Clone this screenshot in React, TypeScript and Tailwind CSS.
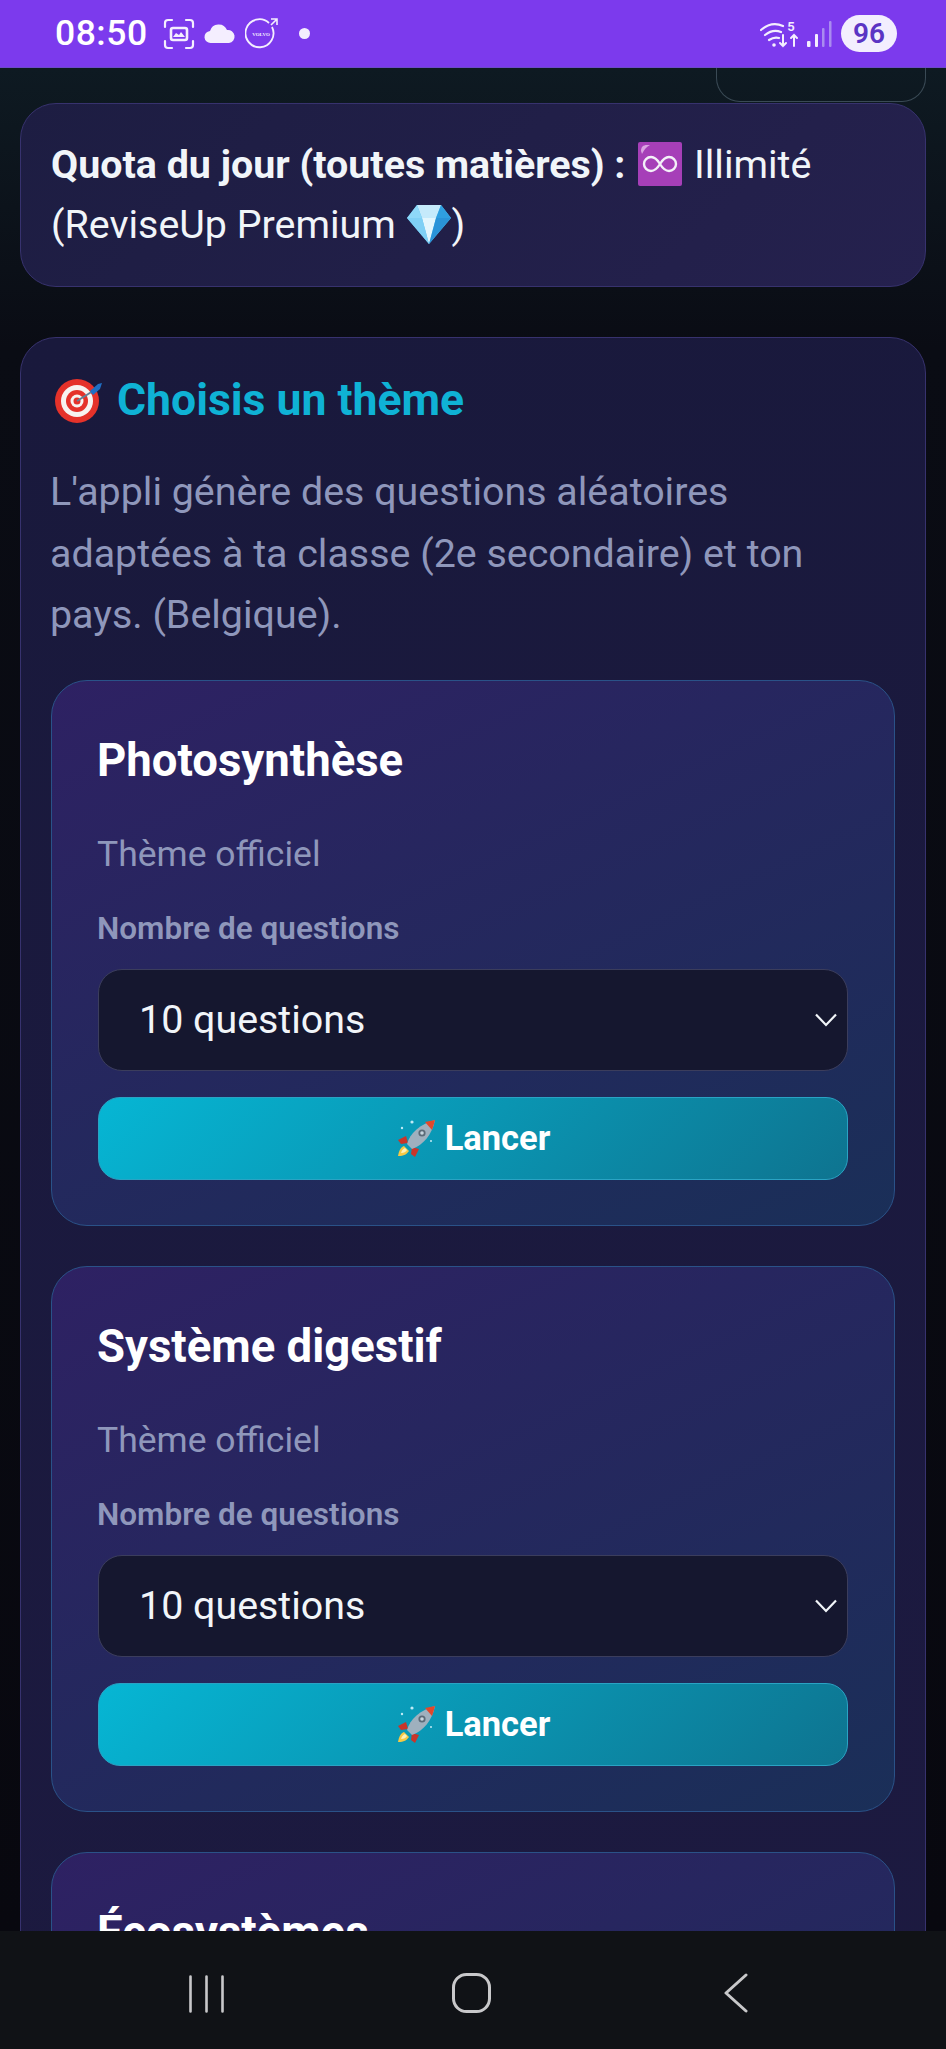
import React from "react";

const Gem = () => (
  <svg viewBox="0 0 44 40" className="inline-block w-[44px] h-[40px] align-[-6px] mx-px">
    <path d="M10 1h24l10 13-22 26L0 14z" fill="#5cc3f2" />
    <path d="M10 1h24l-5 13H15z" fill="#c5eafb" />
    <path d="M15 14h14l-7 26z" fill="#e3f6fd" />
    <path d="M0 14 10 1l5 13z" fill="#8ed8f8" />
    <path d="M44 14 34 1l-5 13z" fill="#2f9fe0" />
    <path d="M29 14h15L22 40z" fill="#2a93d8" />
    <path d="M0 14h15l7 26z" fill="#7fd0f5" />
  </svg>
);

const Infinity_ = () => (
  <svg viewBox="0 0 44 44" className="inline-block w-[44px] h-[44px] align-[-8px] ml-[3px] mr-[2px]">
    <rect width="44" height="44" rx="2" fill="#a63fb8" />
    <path d="M3 9c0-4 2-6 6-6h3C8 5 6 8 4 12z" fill="#d9a3e2" />
    <path
      d="M22 22c-3-5-6-7-9-7a7 7 0 0 0 0 14c3 0 6-2 9-7s6-7 9-7a7 7 0 0 1 0 14c-3 0-6-2-9-7z"
      fill="none"
      stroke="#f3f0f8"
      strokeWidth="2.4"
    />
  </svg>
);

const Target = () => (
  <svg viewBox="0 0 48 46" className="inline-block w-[48px] h-[46px] ml-[4px]">
    <circle cx="22" cy="24" r="22" fill="#e5322a" />
    <circle cx="22" cy="24" r="16" fill="#f7f3f0" />
    <circle cx="22" cy="24" r="11" fill="#e5322a" />
    <circle cx="22" cy="24" r="6.5" fill="#f7f3f0" />
    <circle cx="22" cy="24" r="3.5" fill="#e5322a" />
    <path d="M22 24 38 14" stroke="#5f7f96" strokeWidth="2" />
    <path d="M35 14l8-7 4-1-2 6-7 6z" fill="#1f6fc4" />
  </svg>
);

const Rocket = () => (
  <svg viewBox="0 0 40 40" className="inline-block w-[40px] h-[40px] align-[-9px]">
    <path d="M2 37c1-6 3-9 6-10l5 5c-2 3-5 5-11 5z" fill="#f6c945" />
    <path d="M5 34c1-3 2-4 4-5l2 2c-1 2-3 3-6 3z" fill="#fdf1b8" />
    <path d="M10 17 2 21l3 4 7-1z" fill="#c9352a" />
    <path d="M23 30l-4 8-4-3 1-7z" fill="#c9352a" />
    <path d="M11 25C14 14 24 5 39 1c-3 15-12 25-23 29z" fill="#9fb0be" />
    <path d="M29 3 39 1c-1 4-2 7-3 10z" fill="#e2482b" />
    <circle cx="26" cy="14" r="3.6" fill="#5c6b78" />
    <circle cx="26" cy="14" r="1.8" fill="#c8d5de" />
    <circle cx="6" cy="9" r="1.2" fill="#bfeaf5" />
    <circle cx="35" cy="22" r="1" fill="#bfeaf5" />
    <circle cx="16" cy="3" r="1.6" fill="#bfeaf5" />
  </svg>
);

const StatusBar = () => (
  <div className="h-[68px] shrink-0 bg-[#7c3aed] border-b border-[#6d4ac9] flex items-center pl-[55px] pr-[49px] text-white">
    <span className="text-[35.5px] font-medium tracking-[0.5px]">08:50</span>
    <svg viewBox="0 0 32 32" className="w-[32px] h-[32px] ml-[15px]" fill="none" stroke="#f4eefe" strokeWidth="2.2" strokeLinecap="round">
      <path d="M2 9V5a3 3 0 0 1 3-3h4M23 2h4a3 3 0 0 1 3 3v4M30 23v4a3 3 0 0 1-3 3h-4M9 30H5a3 3 0 0 1-3-3v-4" />
      <rect x="8" y="10" width="16" height="12" rx="2" strokeWidth="2.6" />
      <path d="M10 19l3-4 3 2 2-3 4 5z" fill="#f4eefe" stroke="none" />
    </svg>
    <svg viewBox="0 0 32 20" className="w-[32px] h-[20px] ml-[9px]" fill="#f4eefe">
      <path d="M7 19a6 6 0 0 1-1-12 9 9 0 0 1 17-1 6.5 6.5 0 0 1 2 13z" />
    </svg>
    <svg viewBox="0 0 34 34" className="w-[34px] h-[34px] ml-[9px]" fill="none" stroke="#f4eefe" strokeWidth="1.8">
      <path d="M27 10A14 14 0 1 1 24 6" />
      <path d="M26 2h6v6M32 2l-6 6" strokeWidth="1.6" />
      <text x="16" y="19" textAnchor="middle" fontSize="5" fontWeight="700" fill="#f4eefe" stroke="none" fontFamily="'Liberation Serif', serif">
        VOLVO
      </text>
    </svg>
    <span className="w-[11px] h-[11px] rounded-full bg-[#f4eefe] ml-[20px]" />
    <div className="ml-auto flex items-center">
      <svg viewBox="0 0 40 30" className="w-[40px] h-[30px]" fill="none" stroke="#f4eefe" strokeWidth="2.2" strokeLinecap="round">
        <path d="M1 11c7-6 15-7 22-4M5 16c5-4 11-5 16-3M9 21c3-2 7-3 10-2" />
        <circle cx="14" cy="26" r="1.8" fill="#f4eefe" stroke="none" />
        <text x="31" y="12" textAnchor="middle" fontSize="13" fontWeight="600" fill="#f4eefe" stroke="none" fontFamily="Roboto, sans-serif">
          5
        </text>
        <path d="M23 16v11m-3-3 3 3 3-3M34 27V16m-3 3 3-3 3 3" strokeWidth="2" />
      </svg>
      <svg viewBox="0 0 25 26" className="w-[25px] h-[26px] ml-[7px]">
        <rect x="0" y="20" width="3.5" height="6" rx="1" fill="#f4eefe" />
        <rect x="8" y="13" width="3" height="13" rx="1" fill="#f4eefe" />
        <rect x="15" y="7" width="2.5" height="19" rx="1" fill="#a98bf0" />
        <rect x="22" y="0" width="2.5" height="26" rx="1" fill="#a98bf0" />
      </svg>
      <span className="ml-[9px] w-[56px] h-[37px] rounded-full bg-[#f3eefe] text-[#5b34c4] text-[28px] font-semibold flex items-center justify-center">
        96
      </span>
    </div>
  </div>
);

const NavBar = () => (
  <div className="h-[118px] shrink-0 bg-[#101216] flex items-start pt-[42px] pl-[189px] relative z-10">
    <svg viewBox="0 0 35 38" className="w-[35px] h-[38px] mt-[2px]" fill="none" stroke="#c8c8ca" strokeWidth="2.6" strokeLinecap="round">
      <path d="M1.5 1.5v35M17.5 1.5v35M33.5 1.5v35" />
    </svg>
    <svg viewBox="0 0 39 40" className="w-[39px] h-[40px] ml-[228px]" fill="none" stroke="#c8c8ca" strokeWidth="3">
      <rect x="1.5" y="1.5" width="36" height="37" rx="13" />
    </svg>
    <svg viewBox="0 0 24 40" className="w-[24px] h-[40px] ml-[233px]" fill="none" stroke="#c8c8ca" strokeWidth="3" strokeLinecap="round" strokeLinejoin="round">
      <path d="M22 2 2 20l20 18" />
    </svg>
  </div>
);

const ThemeCard = ({ title }: { title: string }) => (
  <div className="rounded-[36px] border border-[#2a5288] bg-[linear-gradient(155deg,#2e2163,#1a2f58)] px-[46px] pt-[50px] pb-[45px]">
    <h3 className="-ml-px text-[45.5px] leading-[60px] font-bold text-white">{title}</h3>
    <p className="-ml-px mt-[33px] text-[35.5px] leading-[60px] text-[#8f97bb]">Thème officiel</p>
    <p className="-ml-px mt-[25px] text-[31.5px] leading-[40px] font-semibold text-[#8f97bb]">Nombre de questions</p>
    <div className="mt-[20px] h-[102px] rounded-[24px] border border-[#3b3d5c] bg-[#15172f] flex items-center justify-between pl-[40px] pr-[10px]">
      <span className="text-[39.4px] text-[#f1f5f9]">10 questions</span>
      <svg viewBox="0 0 22 14" className="w-[22px] h-[14px]" fill="none" stroke="#f1f5f9" strokeWidth="2.2">
        <path d="M1 1.5 11 12 21 1.5" />
      </svg>
    </div>
    <div className="mt-[26px] h-[83px] rounded-[22px] border border-[#2aa3c4] bg-[linear-gradient(135deg,#06b6d4,#0e7490)] flex items-center justify-center gap-[9px] text-[34.5px] font-bold text-white">
      <Rocket />
      <span>Lancer</span>
    </div>
  </div>
);

export default function App() {
  return (
    <div className="w-[946px] h-[2049px] flex flex-col overflow-hidden font-['Roboto',sans-serif] bg-[#08080f]">
      <StatusBar />
      <main className="flex-1 min-h-0 overflow-hidden px-[20px] bg-[linear-gradient(to_bottom,#0e1a22_0%,#0a0c14_15%,#08080f_100%)]">
        <div className="flex justify-end">
          <div className="w-[210px] h-[34px] rounded-b-[24px] border border-t-0 border-[#3a4a55]" />
        </div>
        <div className="mt-px rounded-[36px] border border-[#37326e] bg-[linear-gradient(135deg,#1d1d42,#25214e)] pl-[30px] pr-[31px] py-[31px] text-[39.4px] leading-[60px] text-[#f1f5f9]">
          <strong className="font-bold">Quota du jour (toutes matières) :</strong> <Infinity_ /> Illimité (ReviseUp Premium <Gem />)
        </div>
        <section className="mt-[50px] rounded-t-[36px] border border-[#37326e] bg-[linear-gradient(160deg,#19193c,#1d1a41)] px-[30px] pt-[31px]">
          <h2 className="h-[62px] flex items-center gap-[14px] text-[44.5px] font-bold text-[#0fb2d5]">
            <Target />
            <span>Choisis un thème</span>
          </h2>
          <p className="-ml-px mt-[30px] text-[39.4px] leading-[61.5px] text-[#8f97bb]">
            L'appli génère des questions aléatoires adaptées à ta classe (2e secondaire) et ton pays. (Belgique).
          </p>
          <div className="mt-[34.5px] flex flex-col gap-[40px]">
            <ThemeCard title="Photosynthèse" />
            <ThemeCard title="Système digestif" />
            <ThemeCard title="Écosystèmes" />
          </div>
        </section>
      </main>
      <NavBar />
    </div>
  );
}
